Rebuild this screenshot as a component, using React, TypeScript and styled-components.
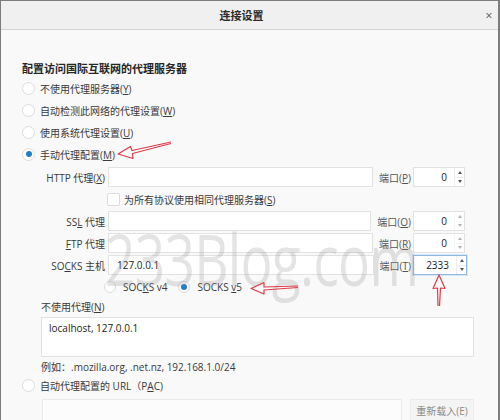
import styled, { createGlobalStyle } from "styled-components";

const GlobalStyle = createGlobalStyle`
  html, body { margin: 0; padding: 0; background: #fff; }
  body {
    font-family: "Open Sans", "Noto Sans CJK SC", sans-serif;
    font-size: 10px;
    color: #3a3a3a;
  }
  u { text-decoration-thickness: 1px; text-underline-offset: 1px; }
`;

const Window = styled.div`
  position: relative;
  width: 500px;
  height: 420px;
  box-sizing: border-box;
  border: 1px solid #7d7d7d;
  border-right-width: 2px;
  border-bottom: none;
  background: #f9f9f9;
  overflow: hidden;
`;

const TitleBar = styled.div`
  height: 28px;
  display: flex;
  align-items: center;
  background: #f0f0f0;
  border-bottom: 1px solid #d4d4d4;
`;

const Title = styled.div`
  flex: 1;
  text-align: center;
  font-size: 11px;
  font-weight: 600;
  color: #2c2c2c;
`;

const Close = styled.div`
  width: 14px;
  margin-right: 2px;
  text-align: center;
  font-size: 12px;
  color: #555;
`;

const Body = styled.div`
  padding-left: 21px;
`;

const Heading = styled.div`
  margin-top: 31px;
  height: 16px;
  line-height: 16px;
  font-size: 11px;
  font-weight: 700;
  color: #262626;
`;

const RadioRow = styled.div<{ indent?: number }>`
  height: 22px;
  display: flex;
  align-items: center;
  padding-left: ${({ indent = 0 }) => indent}px;
`;

const Radio = styled.span<{ checked?: boolean; size?: number }>`
  width: ${({ size = 13 }) => size}px;
  height: ${({ size = 13 }) => size}px;
  box-sizing: border-box;
  border-radius: 50%;
  border: 1px solid #dcdcdc;
  background: #fff;
  margin-right: ${({ size = 13 }) => (size === 13 ? 5 : 7)}px;
  flex-shrink: 0;
  display: flex;
  align-items: center;
  justify-content: center;
  &::after {
    content: "";
    display: ${({ checked }) => (checked ? "block" : "none")};
    width: 6px;
    height: 6px;
    border-radius: 50%;
    background: #1f80c8;
  }
`;

const Gap = styled.span<{ w: number }>`
  width: ${({ w }) => w}px;
  flex-shrink: 0;
`;

const FieldRow = styled.div<{ top?: number }>`
  margin-top: ${({ top = 0 }) => top}px;
  height: 22px;
  display: flex;
  align-items: center;
  padding-right: 33px;
`;

const FieldLabel = styled.div`
  width: 83px;
  padding-right: 3px;
  box-sizing: content-box;
  text-align: right;
  white-space: nowrap;
`;

const TextBox = styled.div`
  flex: 1;
  height: 20px;
  box-sizing: border-box;
  border: 1px solid #e2e2e2;
  background: #fff;
  display: flex;
  align-items: center;
  padding-left: 8px;
  color: #222;
`;

const PortLabel = styled.div`
  padding: 0 2px 0 6px;
  white-space: nowrap;
  color: #555;
`;

const PortBox = styled.div<{ focused?: boolean }>`
  width: ${({ focused }) => (focused ? 54 : 52)}px;
  margin-right: ${({ focused }) => (focused ? -2 : 0)}px;
  height: 20px;
  box-sizing: border-box;
  border: 1px solid ${({ focused }) => (focused ? "#8fb8e3" : "#e2e2e2")};
  box-shadow: ${({ focused }) => (focused ? "0 0 0 1px #d5e6f6" : "none")};
  background: #fff;
  display: flex;
  align-items: stretch;
  color: #222;
`;

const PortValue = styled.div`
  flex: 1;
  padding-right: 7px;
  display: flex;
  align-items: center;
  justify-content: flex-end;
`;

const Spinner = styled.div<{ dim?: boolean }>`
  width: 9px;
  border-left: 1px solid #ececec;
  display: flex;
  flex-direction: column;
  opacity: ${({ dim }) => (dim ? 0.45 : 1)};
`;

const SpinHalf = styled.div<{ down?: boolean }>`
  flex: 1;
  display: flex;
  align-items: center;
  justify-content: center;
  border-top: ${({ down }) => (down ? "1px solid #ececec" : "none")};
  &::after {
    content: "";
    width: 0;
    height: 0;
    border-left: 2px solid transparent;
    border-right: 2px solid transparent;
    ${({ down }) =>
      down ? "border-top: 3px solid #555;" : "border-bottom: 3px solid #555;"}
  }
`;

const CheckRow = styled.div`
  height: 22px;
  display: flex;
  align-items: center;
  padding-left: 85px;
`;

const Checkbox = styled.span`
  width: 13px;
  height: 13px;
  box-sizing: border-box;
  border: 1px solid #dcdcdc;
  border-radius: 2px;
  background: #fff;
  margin-right: 4px;
`;

const SubLabel = styled.div<{ top?: number }>`
  margin-top: ${({ top = 0 }) => top}px;
  padding-left: 19px;
  height: 14px;
  line-height: 14px;
`;

const TextArea = styled.div`
  margin: 3px 24px 0 19px;
  height: 40px;
  box-sizing: border-box;
  border: 1px solid #e2e2e2;
  background: #fff;
  padding: 3px 0 0 7px;
  line-height: 14px;
  color: #222;
`;

const PacRow = styled.div`
  margin-top: 3px;
  display: flex;
  gap: 8px;
  padding: 0 24px 0 20px;
  height: 22px;
`;

const PacInput = styled.div`
  flex: 1;
  border: 1px solid #ececec;
  background: #fcfcfc;
`;

const ReloadButton = styled.div`
  width: 62px;
  border: 1px solid #ececec;
  background: #f4f4f4;
  color: #8a8a8a;
  display: flex;
  align-items: center;
  justify-content: center;
`;

// watermark lies over the form, as in the screenshot
const Watermark = styled.div`
  position: absolute;
  left: 104px;
  top: 208px;
  font-family: "Open Sans", sans-serif;
  font-size: 72px;
  letter-spacing: -1px;
  color: rgba(150, 150, 150, 0.26);
  transform: scaleX(0.74);
  transform-origin: left top;
  pointer-events: none;
  white-space: nowrap;
`;

const Arrows = styled.svg`
  position: absolute;
  left: 0;
  top: 0;
  pointer-events: none;
`;

export default function App() {
  return (
    <Window>
      <GlobalStyle />
      <TitleBar>
        <Title>连接设置</Title>
        <Close>×</Close>
      </TitleBar>
      <Body>
        <Heading>配置访问国际互联网的代理服务器</Heading>
        <RadioRow>
          <Radio />
          <span>
            不使用代理服务器(<u>Y</u>)
          </span>
        </RadioRow>
        <RadioRow>
          <Radio />
          <span>
            自动检测此网络的代理设置(<u>W</u>)
          </span>
        </RadioRow>
        <RadioRow>
          <Radio />
          <span>
            使用系统代理设置(<u>U</u>)
          </span>
        </RadioRow>
        <RadioRow>
          <Radio checked />
          <span>
            手动代理配置(<u>M</u>)
          </span>
        </RadioRow>

        <FieldRow top={1}>
          <FieldLabel>
            HTTP 代理(<u>X</u>)
          </FieldLabel>
          <TextBox />
          <PortLabel>
            端口(<u>P</u>)
          </PortLabel>
          <PortBox>
            <PortValue>0</PortValue>
            <Spinner>
              <SpinHalf />
              <SpinHalf down />
            </Spinner>
          </PortBox>
        </FieldRow>
        <CheckRow>
          <Checkbox />
          <span>
            为所有协议使用相同代理服务器(<u>S</u>)
          </span>
        </CheckRow>
        <FieldRow>
          <FieldLabel>
            SS<u>L</u> 代理
          </FieldLabel>
          <TextBox />
          <PortLabel>
            端口(<u>O</u>)
          </PortLabel>
          <PortBox>
            <PortValue>0</PortValue>
            <Spinner dim>
              <SpinHalf />
              <SpinHalf down />
            </Spinner>
          </PortBox>
        </FieldRow>
        <FieldRow>
          <FieldLabel>
            <u>F</u>TP 代理
          </FieldLabel>
          <TextBox />
          <PortLabel>
            端口(<u>R</u>)
          </PortLabel>
          <PortBox>
            <PortValue>0</PortValue>
            <Spinner dim>
              <SpinHalf />
              <SpinHalf down />
            </Spinner>
          </PortBox>
        </FieldRow>
        <FieldRow>
          <FieldLabel>
            SO<u>C</u>KS 主机
          </FieldLabel>
          <TextBox>127.0.0.1</TextBox>
          <PortLabel>
            端口(<u>T</u>)
          </PortLabel>
          <PortBox focused>
            <PortValue>2333</PortValue>
            <Spinner>
              <SpinHalf />
              <SpinHalf down />
            </Spinner>
          </PortBox>
        </FieldRow>
        <RadioRow indent={82}>
          <Radio size={12} />
          <span>
            SOC<u>K</u>S v4
          </span>
          <Gap w={11} />
          <Radio size={12} checked />
          <span>
            SOCKS <u>v</u>5
          </span>
        </RadioRow>

        <SubLabel top={2}>
          不使用代理(<u>N</u>)
        </SubLabel>
        <TextArea>localhost, 127.0.0.1</TextArea>
        <SubLabel top={3}>例如：.mozilla.org, .net.nz, 192.168.1.0/24</SubLabel>
        <RadioRow>
          <Radio />
          <span>
            自动代理配置的 URL（P<u>A</u>C)
          </span>
        </RadioRow>
        <PacRow>
          <PacInput />
          <ReloadButton>重新载入(E)</ReloadButton>
        </PacRow>
      </Body>

      <Watermark>233Blog.com</Watermark>

      <Arrows width="500" height="420" viewBox="0 0 500 420">
        <g fill="none" stroke="#e23a46" strokeWidth="1.2" strokeLinejoin="round">
          <path d="M170 141 L131 149.5 L129.5 145.5 L117 153 L132 157.5 L131.5 152.5 L170 142.5" />
          <path d="M297 285 L263 286 L263 281.5 L250 287.5 L263 293 L263 289 L297 286.5" />
          <path d="M437 305 L436.5 287 L432 287.5 L438 274 L444 287.5 L439.5 287 L438.5 305" />
        </g>
      </Arrows>
    </Window>
  );
}
